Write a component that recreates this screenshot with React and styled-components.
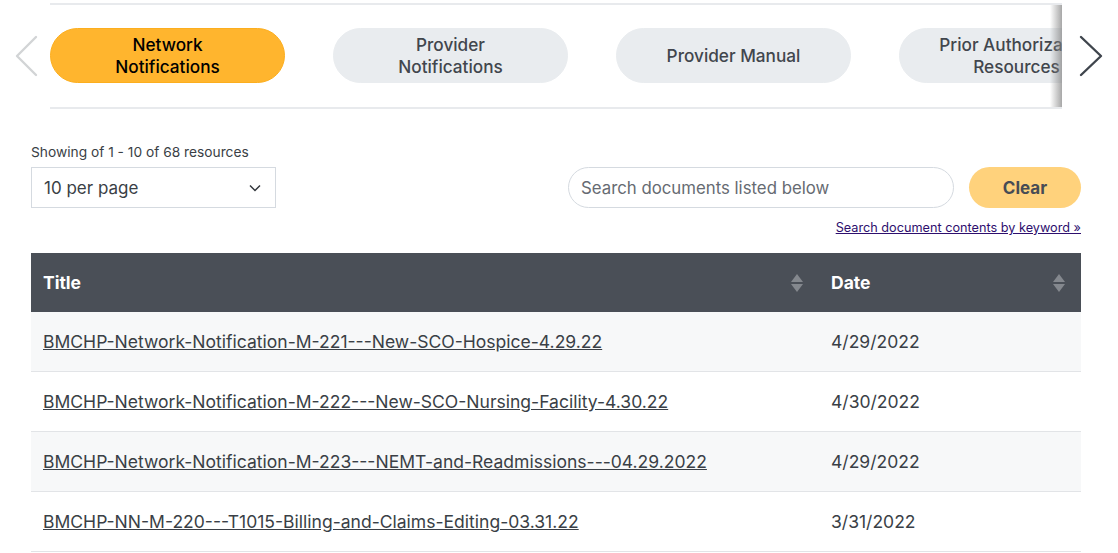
import styled, { createGlobalStyle } from "styled-components";

const Global = createGlobalStyle`
  html, body {
    margin: 0;
    padding: 0;
    background: #fff;
    overflow: hidden;
    font-family: "Inter", "Liberation Sans", sans-serif;
    color: #3a3f46;
  }
`;

const Page = styled.div`
  width: 1118px;
  height: 553px;
  overflow: hidden;
`;

const Carousel = styled.div`
  display: flex;
  align-items: center;
  height: 106px;
  margin-top: 3px;
`;

const Arrow = styled.button`
  flex: none;
  width: 50px;
  height: 50px;
  border: 0;
  background: none;
  display: flex;
  align-items: center;
  padding: 0 0 0 ${(p) => (p.$right ? "17px" : "14px")};
  svg {
    display: block;
  }
`;

const Track = styled.div`
  position: relative;
  width: 1012px;
  height: 106px;
  box-sizing: border-box;
  border-top: 2px solid #e8eaed;
  border-bottom: 2px solid #e8eaed;
  padding-bottom: 1px;
  display: flex;
  align-items: center;
  gap: 48px;
  overflow: hidden;
  &::after {
    content: "";
    position: absolute;
    top: 0;
    bottom: 0;
    right: 0;
    width: 12px;
    background: linear-gradient(to right, rgba(150, 150, 150, 0), rgba(130, 130, 130, 0.7));
  }
`;

const Pill = styled.div`
  flex: none;
  width: 235px;
  height: 55px;
  box-sizing: border-box;
  border-radius: 28px;
  display: flex;
  align-items: center;
  justify-content: center;
  text-align: center;
  font-size: 17.2px;
  line-height: 22px;
  font-weight: 500;
  background: ${(p) => (p.$active ? "#ffb52e" : "#e9ecef")};
  border: 1px solid ${(p) => (p.$active ? "#fcae1e" : "#e9ecef")};
  color: ${(p) => (p.$active ? "#000" : "#41464d")};
`;

const Controls = styled.div`
  display: flex;
  justify-content: space-between;
  align-items: flex-start;
  padding: 34px 37px 0 31px;
`;

const PerPage = styled.div`
  display: flex;
  flex-direction: column;
`;

const Showing = styled.div`
  font-size: 13.75px;
  line-height: 18px;
  height: 24px;
`;

const Select = styled.div`
  width: 245px;
  height: 41px;
  box-sizing: border-box;
  border: 1px solid #d5dae0;
  display: flex;
  align-items: center;
  justify-content: space-between;
  padding: 0 14px 0 12px;
  font-size: 17px;
`;

const SearchArea = styled.div`
  display: flex;
  flex-direction: column;
  align-items: flex-end;
  padding-top: 24px;
`;

const SearchRow = styled.div`
  display: flex;
  gap: 15px;
`;

const SearchBox = styled.div`
  width: 386px;
  height: 41px;
  box-sizing: border-box;
  border: 1px solid #d5dae0;
  border-radius: 21px;
  padding: 0 12px;
  display: flex;
  align-items: center;
  font-size: 16.8px;
  color: #666b72;
`;

const ClearButton = styled.button`
  width: 112px;
  height: 41px;
  border: 0;
  border-radius: 21px;
  background: #ffd27c;
  color: #474c55;
  font-family: inherit;
  font-size: 17px;
  font-weight: 700;
`;

const KeywordLink = styled.a`
  margin-top: 11px;
  font-size: 12.7px;
  line-height: 18px;
  color: #2e0f6e;
  text-decoration: underline;
`;

const Table = styled.table`
  width: 1050px;
  margin: 16px 0 0 31px;
  border-collapse: collapse;
  table-layout: fixed;
`;

const TitleCol = styled.col`
  width: 788px;
`;

const HeadCell = styled.th`
  height: 59px;
  padding: 0 16px 0 12px;
  background: #4a4f57;
  color: #fff;
  text-align: left;
  font-size: 17.5px;
  font-weight: 700;
`;

const HeadInner = styled.div`
  display: flex;
  align-items: center;
  justify-content: space-between;
`;

const Row = styled.tr`
  background: ${(p) => (p.$shaded ? "#f7f8f9" : "#fff")};
  border-bottom: 1px solid #e2e4e7;
`;

const Cell = styled.td`
  height: 59px;
  padding: 0 12px;
  font-size: 17.55px;
`;

const DocLink = styled.a`
  color: #3a3f46;
  text-decoration: underline;
`;

const rows = [
  ["BMCHP-Network-Notification-M-221---New-SCO-Hospice-4.29.22", "4/29/2022"],
  ["BMCHP-Network-Notification-M-222---New-SCO-Nursing-Facility-4.30.22", "4/30/2022"],
  ["BMCHP-Network-Notification-M-223---NEMT-and-Readmissions---04.29.2022", "4/29/2022"],
  ["BMCHP-NN-M-220---T1015-Billing-and-Claims-Editing-03.31.22", "3/31/2022"],
];

function Chevron({ right, color }) {
  return (
    <svg width="24" height="42" viewBox="0 0 24 42" fill="none">
      <path
        d={right ? "M2 2 L22 21 L2 40" : "M22 2 L3 21 L22 40"}
        stroke={color}
        strokeWidth="2.4"
        strokeLinecap="round"
        strokeLinejoin="round"
      />
    </svg>
  );
}

function SortIcon() {
  return (
    <svg width="12" height="18" viewBox="0 0 12 18" fill="#84888e">
      <path d="M6 0 L12 8 L0 8 Z" />
      <path d="M0 10 L12 10 L6 18 Z" />
    </svg>
  );
}

export default function App() {
  return (
    <Page>
      <Global />
      <Carousel>
        <Arrow aria-label="Previous">
          <Chevron color="#d2d4d6" />
        </Arrow>
        <Track>
          <Pill $active>Network<br />Notifications</Pill>
          <Pill>Provider<br />Notifications</Pill>
          <Pill>Provider Manual</Pill>
          <Pill>Prior Authorization<br />Resources</Pill>
        </Track>
        <Arrow $right aria-label="Next">
          <Chevron right color="#3f454d" />
        </Arrow>
      </Carousel>
      <Controls>
        <PerPage>
          <Showing>Showing of 1 - 10 of 68 resources</Showing>
          <Select>
            10 per page
            <svg width="12" height="8" viewBox="0 0 12 8" fill="none">
              <path d="M1 1.5 L6 6.5 L11 1.5" stroke="#33373d" strokeWidth="1.5" />
            </svg>
          </Select>
        </PerPage>
        <SearchArea>
          <SearchRow>
            <SearchBox>Search documents listed below</SearchBox>
            <ClearButton>Clear</ClearButton>
          </SearchRow>
          <KeywordLink href="#">Search document contents by keyword »</KeywordLink>
        </SearchArea>
      </Controls>
      <Table>
        <colgroup>
          <TitleCol />
          <col />
        </colgroup>
        <thead>
          <tr>
            <HeadCell>
              <HeadInner>Title<SortIcon /></HeadInner>
            </HeadCell>
            <HeadCell>
              <HeadInner>Date<SortIcon /></HeadInner>
            </HeadCell>
          </tr>
        </thead>
        <tbody>
          {rows.map(([title, date], i) => (
            <Row key={title} $shaded={i % 2 === 0}>
              <Cell><DocLink href="#">{title}</DocLink></Cell>
              <Cell>{date}</Cell>
            </Row>
          ))}
        </tbody>
      </Table>
    </Page>
  );
}
